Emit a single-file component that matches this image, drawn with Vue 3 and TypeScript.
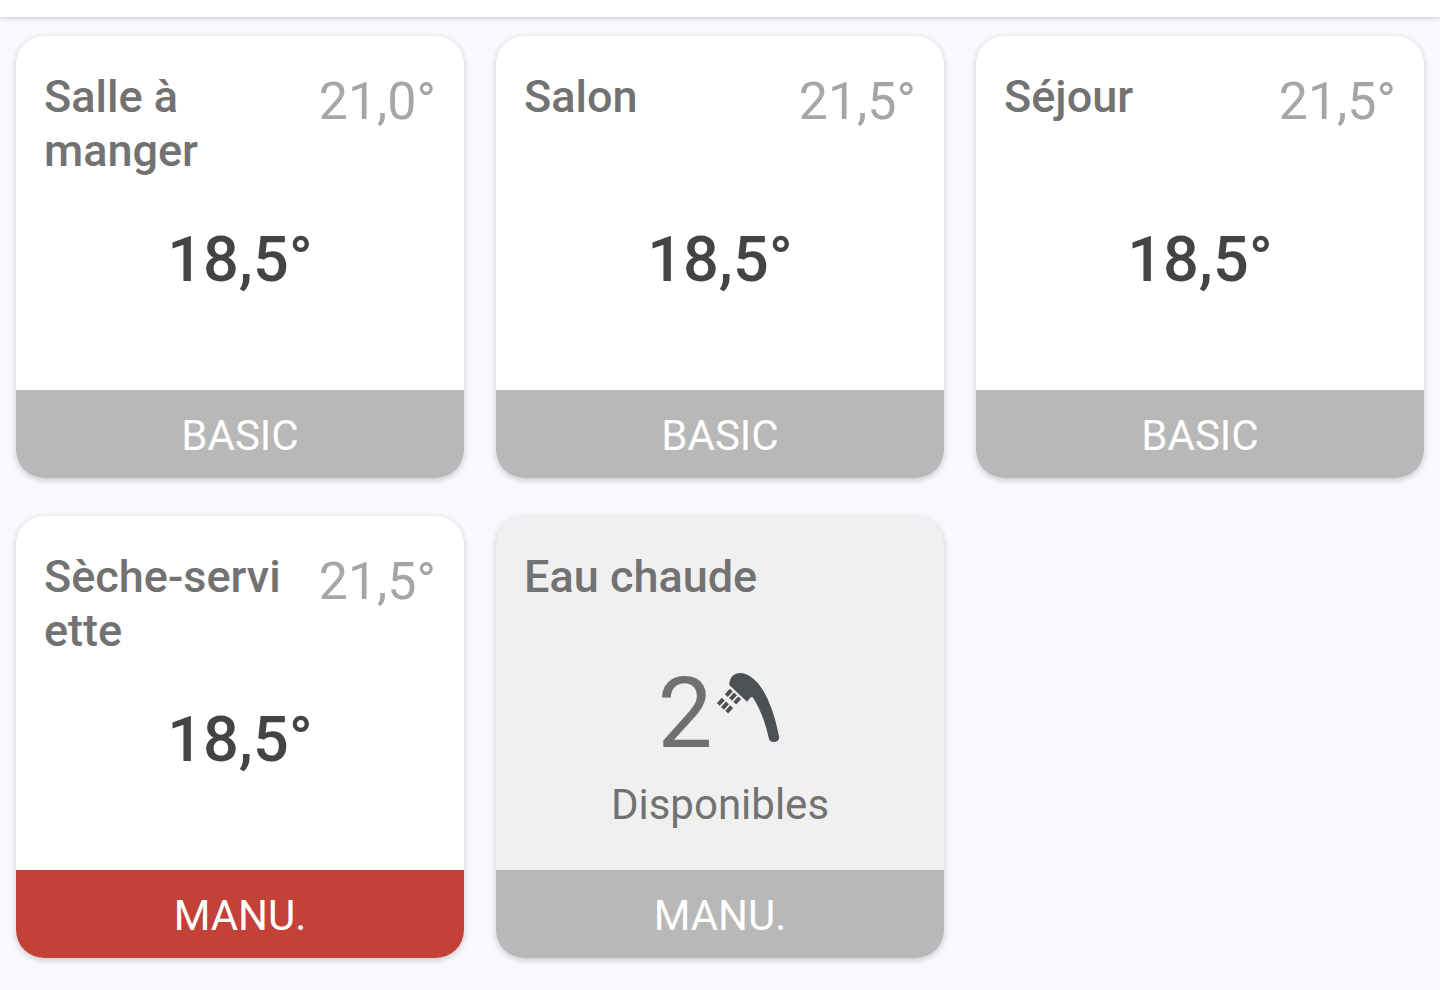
<script setup lang="ts">
interface Room {
  id: string
  // Segments of the name; a line may break only between two segments.
  name: string[]
  target: string
  current: string
  mode: string
  manual: boolean
}

const rooms: Room[] = [
  { id: 'dining', name: ['Salle à ', 'manger'], target: '21,0°', current: '18,5°', mode: 'BASIC', manual: false },
  { id: 'lounge', name: ['Salon'], target: '21,5°', current: '18,5°', mode: 'BASIC', manual: false },
  { id: 'living', name: ['Séjour'], target: '21,5°', current: '18,5°', mode: 'BASIC', manual: false },
  { id: 'towel', name: ['Sèche-servi', 'ette'], target: '21,5°', current: '18,5°', mode: 'MANU.', manual: true },
]

const water = { name: 'Eau chaude', showers: 2, label: 'Disponibles', mode: 'MANU.' }
</script>

<template>
  <div class="screen">
    <header class="topbar"></header>
    <main class="grid">
      <article v-for="room in rooms" :key="room.id" class="card">
        <div class="head">
          <h2 class="name">
            <template v-for="(part, i) in room.name" :key="i"><wbr v-if="i > 0" /><span class="part">{{ part }}</span></template>
          </h2>
          <span class="target">{{ room.target }}</span>
        </div>
        <p class="current">{{ room.current }}</p>
        <button type="button" class="mode" :class="{ manual: room.manual }">{{ room.mode }}</button>
      </article>

      <article class="card water">
        <div class="head">
          <h2 class="name">{{ water.name }}</h2>
        </div>
        <div class="showers">
          <div class="count">
            <span class="number">{{ water.showers }}</span>
            <svg class="shower" viewBox="48 36 201 213" aria-hidden="true">
              <path
                d="M88 75 C88 51 102 39 121 39 C139 40 153 49 168 64 C202 98 224 163 237 229 C239 240 232 246 222 246 C213 246 208 242 206 233 C197 193 180 143 158 112 L152 112 L141 125 Z"
              />
              <g transform="translate(99 110) rotate(42)">
                <rect x="-23" y="-11" width="12" height="22" />
                <rect x="-6" y="-11" width="12" height="22" />
                <rect x="11" y="-11" width="12" height="22" />
                <rect x="-23" y="25" width="12" height="22" />
                <rect x="-6" y="25" width="12" height="22" />
                <rect x="11" y="25" width="12" height="22" />
              </g>
            </svg>
          </div>
          <p class="label">{{ water.label }}</p>
        </div>
        <button type="button" class="mode">{{ water.mode }}</button>
      </article>
    </main>
  </div>
</template>

<style>
body {
  margin: 0;
  background: #f8f9fd;
}
</style>

<style scoped>
.screen {
  min-height: 100vh;
  background: #f8f9fd;
  font-family: Roboto, 'Liberation Sans', sans-serif;
}

.topbar {
  height: 17px;
  background: #fff;
  box-shadow: 0 1px 5px rgba(0, 0, 0, 0.2);
}

.grid {
  display: grid;
  grid-template-columns: repeat(3, minmax(0, 1fr));
  gap: 38px 32px;
  padding: 19px 16px 32px;
}

.card {
  display: flex;
  flex-direction: column;
  min-height: 442px;
  overflow: hidden;
  border-radius: 28px;
  background: #fff;
  box-shadow: 0 2px 6px rgba(0, 0, 0, 0.2);
}

.water {
  background: #f0f0f0;
}

.head {
  display: flex;
  justify-content: space-between;
  gap: 32px;
  height: 144px;
  box-sizing: border-box;
  padding: 34px 28px 0;
}

.name {
  margin: 0;
  color: #727272;
  font-size: 45px;
  font-weight: 500;
  line-height: 54px;
}

.part {
  white-space: nowrap;
}

.target {
  color: #a6a6a6;
  font-size: 52px;
  line-height: 64px;
}

.current {
  flex: 1;
  margin: 0;
  padding-top: 42px;
  color: #444;
  font-size: 63px;
  font-weight: 500;
  line-height: 76px;
  text-align: center;
}

.mode {
  height: 88px;
  margin: 0;
  padding: 2px 0 0;
  border: 0;
  background: #b8b8b8;
  color: #fff;
  font: inherit;
  font-size: 42px;
}

.mode.manual {
  background: #c44138;
}

.showers {
  display: flex;
  flex: 1;
  flex-direction: column;
  align-items: center;
}

.count {
  display: flex;
  gap: 3px;
}

.number {
  color: #707070;
  font-size: 98px;
  line-height: 108px;
}

.shower {
  width: 67px;
  height: 71px;
  margin-top: 12px;
  fill: #4d5156;
}

.label {
  margin: 13px 0 0;
  color: #727272;
  font-size: 42px;
  line-height: 48px;
}
</style>
